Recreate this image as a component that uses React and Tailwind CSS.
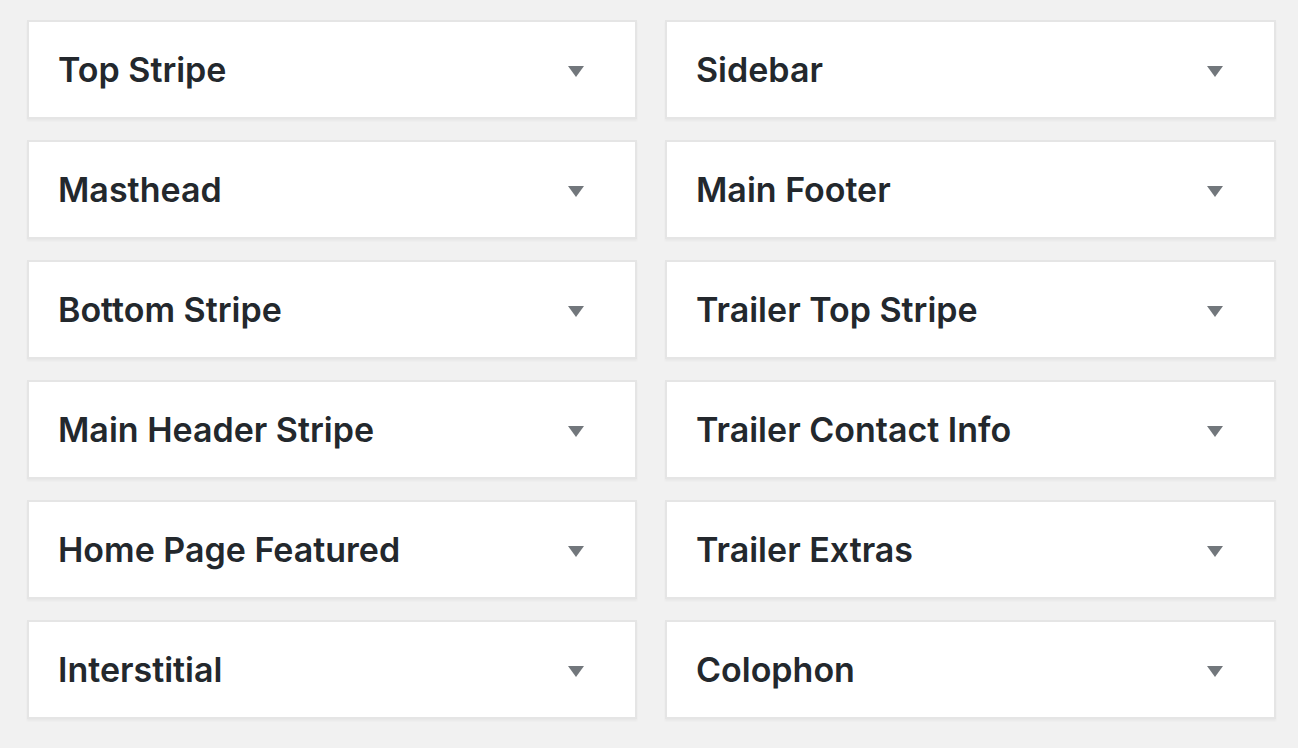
import React from "react";

const left = ["Top Stripe", "Masthead", "Bottom Stripe", "Main Header Stripe", "Home Page Featured", "Interstitial"];
const right = ["Sidebar", "Main Footer", "Trailer Top Stripe", "Trailer Contact Info", "Trailer Extras", "Colophon"];

function Card({ title }) {
  return (
    <div className="h-[99px] bg-white border-2 border-[#e5e5e5] shadow-[0_2px_2px_rgba(0,0,0,0.04)] flex items-center justify-between pl-[29px] pr-[51px]">
      <span className="text-[34px] font-semibold text-[#23282d] leading-none">{title}</span>
      <svg width="16" height="11" viewBox="0 0 16 11" className="mt-[3px]">
        <path d="M0 0 H16 L8 11 Z" fill="#72777c" />
      </svg>
    </div>
  );
}

export default function App() {
  return (
    <div className="w-[1298px] h-[748px] bg-[#f1f1f1] pt-[20px] pl-[27px] font-['Inter',sans-serif]">
      <div className="grid grid-cols-[610px_611px] gap-x-[28px] gap-y-[21px]">
        {left.map((l, i) => (
          <React.Fragment key={i}>
            <Card title={l} />
            <Card title={right[i]} />
          </React.Fragment>
        ))}
      </div>
    </div>
  );
}
